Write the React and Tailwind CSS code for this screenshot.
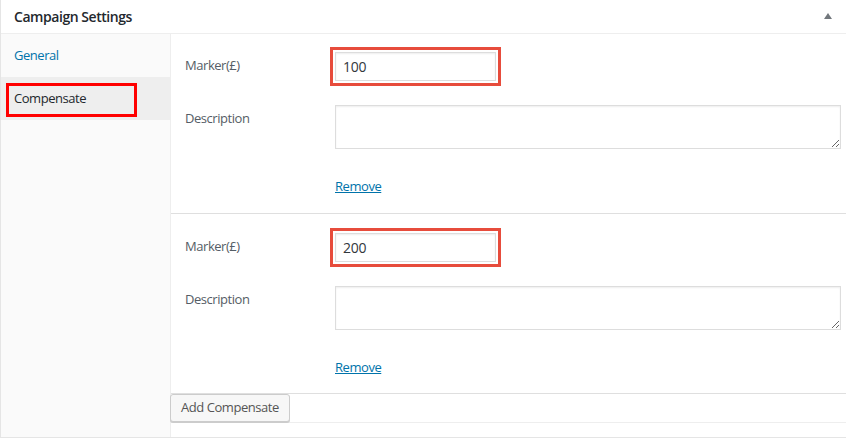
import React from 'react';

const CompensateRow = ({ value, first }) => (
  <div className={`border-b border-[#dfdfdf] ${first ? 'pt-[18px] pb-[18px]' : 'pt-[19px] pb-[17px]'}`}>
    <div className="flex pl-[14px]">
      <label className="w-[150px] pt-[4px] text-[13px] leading-[18px] text-[#555d66]">Marker(£)</label>
      <div className="relative">
        <div className="absolute -inset-[5px] border-[3px] border-[#e74c3c]"></div>
        <input
          type="text"
          defaultValue={value}
          className="block h-[29px] w-[161px] border border-[#dddddd] bg-white px-[7px] text-[14px] tracking-[-0.3px] text-[#32373c] shadow-[inset_0_1px_2px_rgba(0,0,0,0.07)] outline-none"
        />
      </div>
    </div>

    <div className="mt-[24px] flex pl-[14px] pr-[5px]">
      <label className="w-[150px] pt-[4px] text-[13px] leading-[18px] text-[#555d66]">Description</label>
      <textarea
        className="block h-[44px] flex-1 border border-[#dddddd] bg-white shadow-[inset_0_1px_2px_rgba(0,0,0,0.07)] outline-none"
      />
    </div>

    <div className="mt-[28px] pl-[164px] text-[13px] leading-[18px]">
      <a href="#" className="text-[#0073aa] underline">Remove</a>
    </div>
  </div>
);

export default function App() {
  return (
    <div className="h-[440px] w-[846px] bg-white font-['Open_Sans',sans-serif] tracking-[-0.45px]">
      <div className="border-b border-l border-[#e5e5e5]">
        {/* header */}
        <div className="flex h-[34px] items-center justify-between border-b border-[#eeeeee] pl-[13px] pr-[14px]">
          <h2 className="text-[14px] font-semibold text-[#23282d]">Campaign Settings</h2>
          <svg width="8" height="6" viewBox="0 0 8 6" className="-mt-[1px]">
            <polygon points="4,0 8,6 0,6" fill="#72777c" />
          </svg>
        </div>

        <div className="flex h-[403px]">
          {/* tabs */}
          <div className="w-[170px] border-r border-[#eeeeee] bg-[#fafafa]">
            <div className="flex h-[43px] items-center pl-[13px] pt-px text-[13px] text-[#0073aa]">General</div>
            <div className="relative flex h-[43px] items-center bg-[#eeeeee] pl-[13px] pt-px text-[13px] text-[#23282d]">
              Compensate
              <div className="absolute left-[5px] top-[6px] h-[34px] w-[131px] border-[3px] border-[#ff0000]"></div>
            </div>
          </div>

          {/* fields */}
          <div className="flex-1">
            <CompensateRow value="100" first />
            <CompensateRow value="200" />
            <div className="border-b border-[#eeeeee]">
              <button
                type="button"
                className="-ml-px h-[28px] rounded-[3px] border border-[#cccccc] bg-[#f7f7f7] px-[10px] text-[13px] text-[#555555] shadow-[0_1px_0_#cccccc]"
              >
                Add Compensate
              </button>
            </div>
          </div>
        </div>
      </div>
    </div>
  );
}
